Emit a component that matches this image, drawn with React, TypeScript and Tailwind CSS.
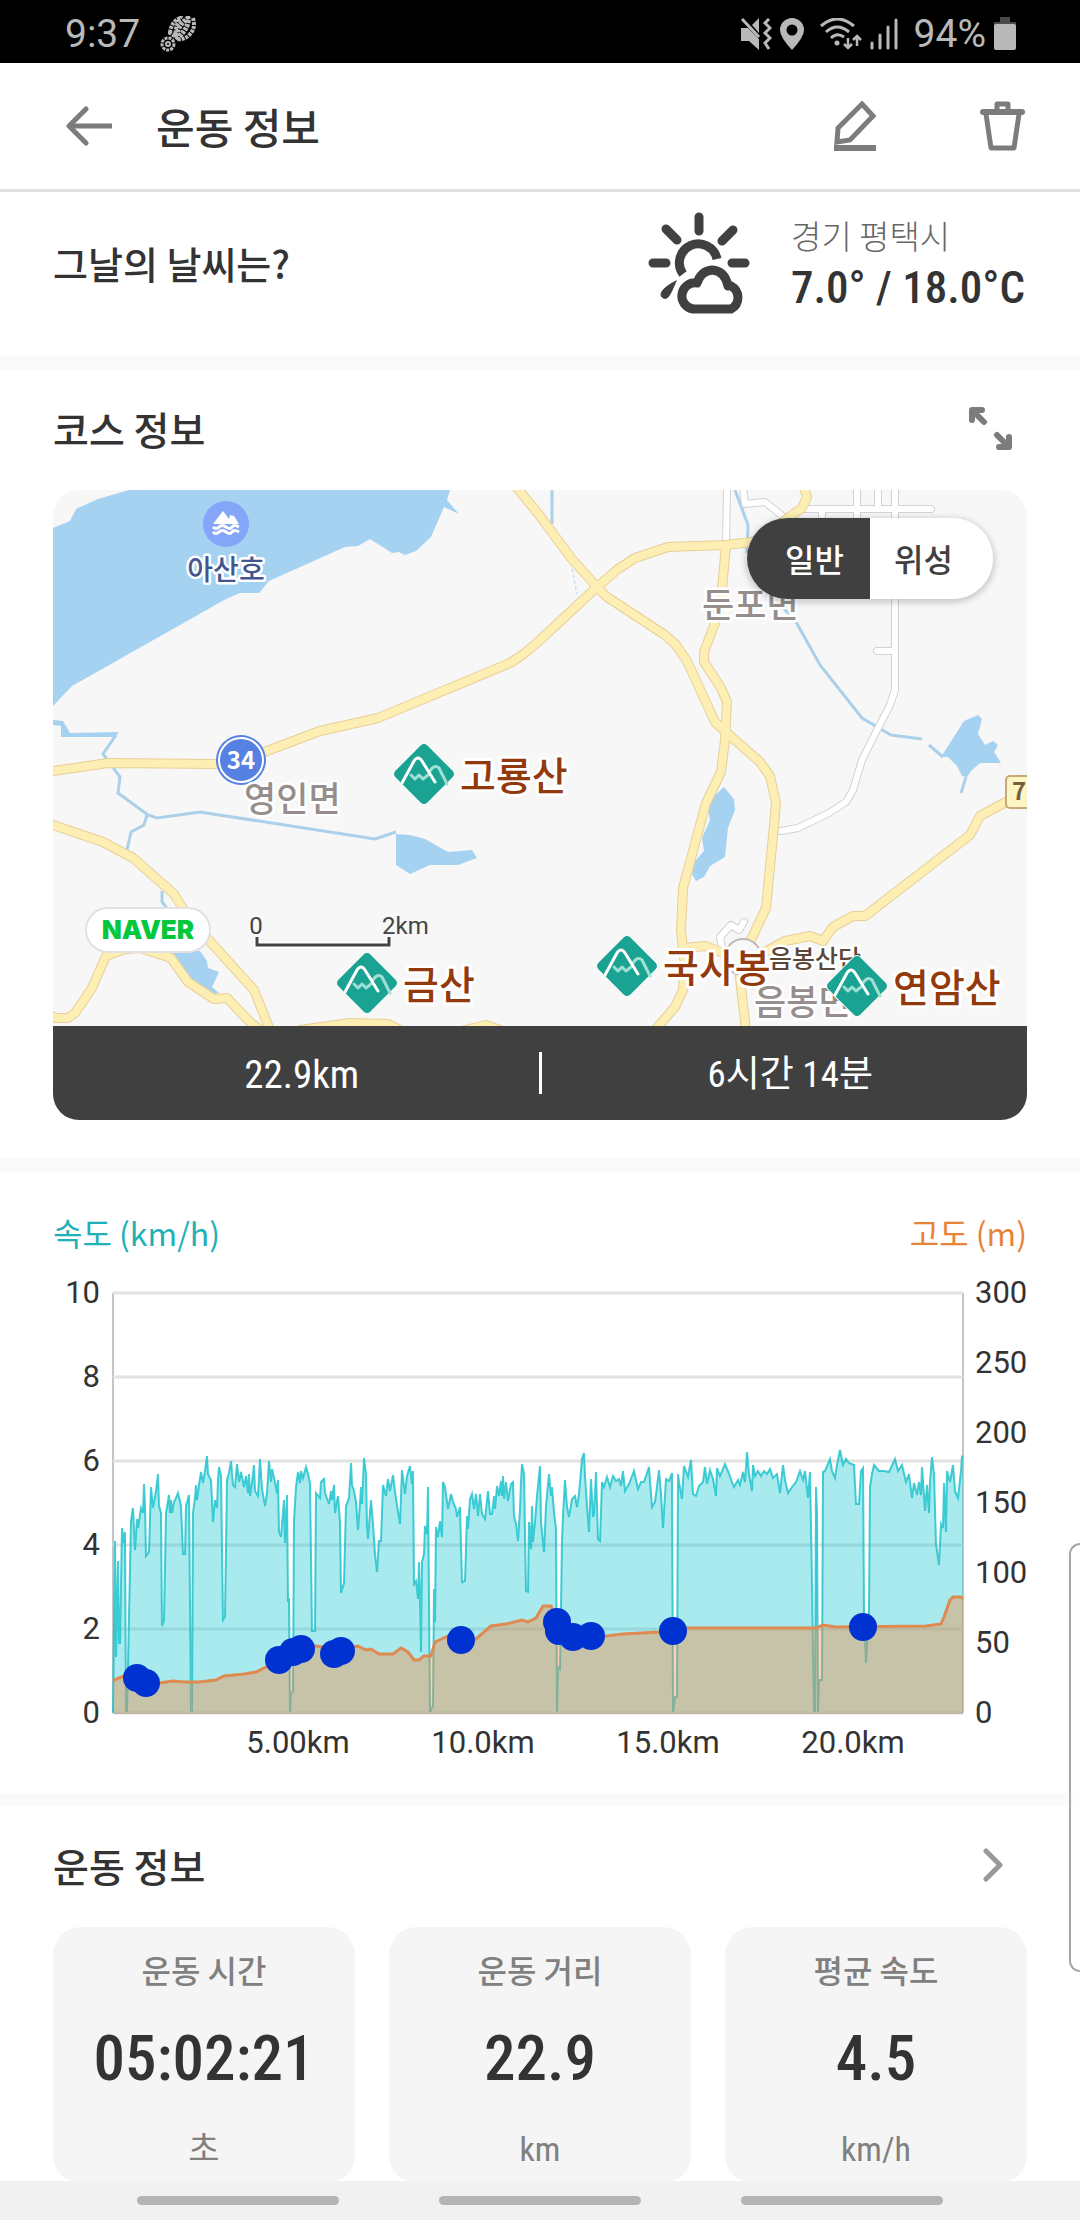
import React, { useState } from 'react';

type Point = [number, number];

// plot area is 850 x 420 units: 37 units per km, 42 units per km/h
const SPEED: Point[] = [
  [0, 420], [2, 248], [3, 364], [5, 268], [6, 350], [7, 350], [9, 235], [11, 250], [12, 239], [13, 420], [14, 420], [18, 228],
  [20, 215], [22, 257], [24, 226], [25, 235], [28, 215], [30, 220], [31, 191], [32, 213], [33, 263], [36, 259], [38, 194], [40, 215],
  [43, 198], [45, 181], [46, 213], [48, 220], [49, 333], [51, 327], [53, 220], [56, 202], [57, 220], [58, 207], [59, 220], [61, 209],
  [63, 205], [65, 200], [68, 213], [70, 261], [72, 261], [73, 213], [76, 202], [78, 420], [79, 420], [80, 220], [82, 205], [83, 192],
  [84, 207], [86, 192], [88, 179], [90, 190], [92, 178], [94, 163], [95, 181], [98, 187], [100, 229], [102, 207], [104, 215], [105, 187],
  [106, 174], [108, 183], [110, 327], [112, 324], [114, 187], [116, 180], [118, 168], [120, 192], [122, 194], [124, 171], [126, 189],
  [128, 179], [131, 194], [133, 183], [135, 200], [136, 181], [137, 203], [139, 190], [141, 172], [142, 198], [145, 203], [147, 166],
  [149, 196], [152, 213], [154, 200], [156, 168], [158, 189], [159, 176], [162, 189], [164, 200], [165, 187], [166, 239], [168, 244],
  [171, 207], [172, 250], [174, 202], [175, 309], [176, 305], [177, 420], [178, 401], [180, 398], [181, 228], [183, 194], [185, 179],
  [187, 190], [188, 178], [190, 185], [193, 174], [195, 181], [197, 190], [199, 338], [202, 338], [203, 200], [207, 205], [208, 189],
  [211, 186], [212, 200], [216, 211], [218, 198], [219, 207], [221, 192], [222, 220], [225, 203], [227, 229], [228, 300], [231, 290],
  [233, 213], [236, 205], [238, 170], [239, 192], [241, 198], [243, 209], [245, 237], [247, 211], [248, 194], [249, 211], [251, 165],
  [253, 181], [254, 233], [255, 246], [258, 207], [260, 231], [262, 261], [264, 279], [266, 248], [268, 248], [270, 192], [273, 203],
  [275, 186], [277, 198], [280, 182], [283, 206], [287, 231], [289, 177], [292, 201], [294, 183], [297, 173], [299, 191], [300, 178],
  [301, 291], [303, 288], [305, 306], [306, 269], [307, 306], [308, 359], [309, 269], [311, 261], [312, 233], [314, 241], [315, 194],
  [317, 420], [318, 417], [320, 413], [321, 296], [322, 329], [323, 234], [325, 244], [327, 228], [329, 244], [330, 189], [332, 194],
  [335, 216], [338, 201], [340, 209], [343, 216], [344, 224], [347, 214], [349, 289], [352, 288], [354, 223], [355, 236], [357, 206],
  [359, 201], [361, 216], [363, 201], [365, 223], [367, 201], [369, 221], [372, 226], [375, 198], [377, 221], [379, 221], [381, 203],
  [382, 216], [384, 193], [386, 203], [388, 188], [389, 203], [390, 183], [391, 206], [393, 189], [395, 208], [398, 191], [400, 189],
  [401, 223], [403, 231], [405, 248], [407, 216], [408, 189], [409, 171], [411, 181], [413, 298], [415, 299], [416, 229], [418, 256],
  [419, 213], [420, 249], [422, 229], [424, 203], [427, 173], [428, 229], [431, 259], [433, 213], [436, 181], [438, 203], [439, 194],
  [441, 219], [443, 236], [444, 420], [445, 374], [447, 376], [449, 249], [450, 223], [452, 187], [454, 214], [456, 224], [459, 206],
  [462, 203], [464, 214], [466, 201], [469, 166], [471, 160], [472, 183], [474, 213], [476, 239], [478, 186], [480, 224], [481, 221],
  [483, 179], [485, 246], [487, 248], [489, 189], [491, 194], [494, 184], [497, 194], [500, 183], [503, 188], [506, 186], [508, 193],
  [510, 178], [512, 198], [516, 191], [521, 178], [525, 196], [528, 189], [531, 189], [536, 174], [537, 188], [539, 214], [542, 209],
  [546, 177], [548, 201], [550, 235], [553, 186], [556, 188], [559, 180], [560, 420], [562, 404], [564, 404], [565, 181], [566, 189],
  [569, 206], [571, 173], [575, 184], [576, 178], [578, 167], [580, 201], [583, 203], [586, 193], [590, 189], [592, 174], [594, 191],
  [597, 177], [600, 186], [603, 203], [604, 175], [607, 183], [612, 171], [615, 178], [619, 189], [621, 194], [625, 187], [627, 192],
  [630, 179], [632, 189], [634, 159], [636, 181], [639, 198], [640, 172], [642, 183], [645, 178], [648, 183], [651, 178], [654, 181],
  [657, 176], [660, 185], [664, 181], [667, 200], [670, 172], [672, 187], [675, 200], [679, 194], [683, 189], [687, 178], [690, 187],
  [692, 178], [695, 205], [697, 179], [699, 290], [701, 420], [702, 420], [703, 194], [704, 220], [705, 420], [706, 387], [709, 387],
  [710, 179], [712, 178], [717, 166], [719, 178], [722, 185], [724, 172], [727, 157], [730, 172], [733, 166], [736, 170], [741, 172],
  [743, 211], [746, 211], [748, 178], [750, 175], [751, 318], [753, 370], [756, 318], [757, 194], [759, 181], [761, 172], [766, 178],
  [771, 178], [776, 179], [782, 166], [785, 178], [789, 172], [793, 189], [796, 181], [799, 205], [801, 190], [804, 202], [806, 189],
  [808, 202], [809, 174], [812, 218], [814, 192], [816, 220], [817, 189], [819, 164], [821, 181], [823, 251], [826, 272], [828, 231],
  [830, 235], [831, 190], [833, 239], [834, 178], [837, 189], [840, 172], [842, 198], [845, 205], [848, 178], [849, 164], [850, 165],
];

const ALTITUDE: Point[] = [
  [0, 388], [3, 386], [11, 383], [24, 386], [33, 390], [46, 390], [60, 388], [72, 389], [86, 389], [103, 387], [111, 383], [131, 381],
  [143, 379], [153, 374], [166, 366], [186, 355], [203, 353], [210, 354], [220, 361], [233, 355], [245, 353], [253, 357], [258, 356],
  [266, 361], [280, 361], [288, 355], [295, 359], [301, 367], [306, 367], [311, 363], [318, 363], [322, 349], [335, 343], [348, 347],
  [363, 346], [371, 339], [378, 333], [393, 331], [409, 327], [415, 329], [423, 325], [430, 313], [438, 313], [440, 318], [444, 329],
  [460, 344], [478, 343], [493, 343], [510, 341], [546, 339], [560, 335], [626, 335], [703, 335], [710, 332], [723, 334], [813, 333],
  [828, 331], [831, 324], [837, 307], [840, 304], [848, 304], [850, 306],
];

const MARKERS: Point[] = [
  [24, 385], [33, 390], [166, 367], [180, 359], [188, 356], [221, 361], [228, 358],
  [348, 347], [444, 329], [446, 338], [460, 344], [478, 343], [560, 338], [750, 334],
];

const toPath = (points: Point[]) => 'M' + points.map(([x, y]) => `${x} ${y}`).join('L');

const MAIN_ROADS = [
  'M53 771L108 763L215 764L264 752L320 731L378 718L510 663L525 653L540 640L597 587L618 569L635 558L668 547L726 545L760 541L785 520L802 508L807 497L804 488',
  'M517 488L540 516L571 558L597 587L607 597L665 635L676 645L687 661L715 722L727 733L760 762L770 776L776 803L773 836L766 908L750 942L742 962',
  'M726 545L721 600L715 623L704 652L704 662L721 688L727 702L725 740L721 772L706 803L683 888L681 930L683 950L685 965L683 990L675 1007L655 1030',
  'M683 948L706 946L730 956L765 952L785 941L810 936L823 941L833 927L853 916L865 916L970 835L980 816L1015 797',
  'M739 970L746 1030',
  'M50 824L103 842L133 858L174 894L190 920L215 947L254 990L270 1030',
  'M50 1015L56 1018L68 1018L75 1013L92 988L106 956L125 949L140 948L171 958L188 982L214 999L227 998L250 1022L260 1030',
  'M300 1030L350 1023L388 1024L400 1030',
  'M465 1030L486 1025L500 1030',
];

const SIDE_ROADS = [
  'M727 488L726 545',
  'M743 488L745 504L765 502L790 522',
  'M805 509H931',
  'M857 488V524',
  'M822 509V530',
  'M878 488V509',
  'M895 488V690L890 705L872 740L862 760L853 790L846 802L829 813L798 828L781 831',
  'M877 651H895',
  'M722 947L720 937L731 925L739 930L744 922',
];

const LAKES = [
  'M53 528L70 521L76 509L98 499L129 490H450L447 500L459 514L444 507L431 537L416 551L405 555L399 552L392 553L370 539L358 546L345 547L327 555L269 581L259 593H240L226 599L72 686L53 706Z',
  'M396 834L410 835L425 839L448 852L472 850L477 858L458 865H430L410 874L396 865Z',
  'M165 945L200 951L207 961L208 968L219 972L212 987L219 993L210 995L190 985L176 962Z',
  'M941 757L964 721L978 715L982 719L978 734L985 745L993 741L998 745L994 752L1001 763L980 763L971 771L967 777L962 776L957 766L948 757Z',
  'M724 787L734 799L735 810L728 828L725 857L710 866L704 877L696 881L692 874L695 861L704 851L702 838L710 820L708 810L713 797Z',
  'M53 720L63 721L70 733L119 732L115 737L61 737L61 726L53 725Z',
];

const RIVERS = [
  'M116 735L103 754L120 777L118 793L148 815L157 818L200 812L375 839L396 832',
  'M147 815L144 825L131 832L127 850',
  'M162 891V902L170 912',
  'M552 490V524',
  'M735 490L748 525L747 553',
  'M778 602L796 622L820 665L862 718L891 735L922 739',
  'M929 745L943 757',
  'M966 777L961 793',
];

const PEAKS = [
  { name: '고룡산', x: 424, y: 774 },
  { name: '금산', x: 367, y: 983 },
  { name: '국사봉', x: 627, y: 966 },
  { name: '연암산', x: 857, y: 986 },
];

const STATS = [
  { label: '운동 시간', value: '05:02:21', unit: '초' },
  { label: '운동 거리', value: '22.9', unit: 'km' },
  { label: '평균 속도', value: '4.5', unit: 'km/h' },
];

const StatusBar: React.FC = () => (
  <div className="flex h-[63px] shrink-0 items-center bg-black pl-[65px] pr-[64px] pt-1 font-[Roboto,sans-serif] text-[39px]/[48px] text-[#b9b9b9]">
    <span>9:37</span>
    <svg className="ml-5 h-9 w-9" viewBox="0 0 36 36" fill="none" stroke="currentColor">
      <circle cx="8" cy="28" r="6" strokeWidth="3" strokeDasharray="3 1" />
      <circle cx="8" cy="28" r="2" strokeWidth="2" />
      <path d="M10 17Q11 6 20 2Q14 14 16 21Z" strokeWidth="4" strokeDasharray="3 1" />
      <path d="M17 20Q17 10 28 2Q30 10 18 22" strokeWidth="5" strokeDasharray="3 1" />
      <path d="M33 2Q36 12 30 18Q25 24 18 23" strokeWidth="4" strokeDasharray="3 1" />
    </svg>
    <div className="ml-auto flex items-center">
      <svg className="h-8 w-8" viewBox="0 0 32 32" fill="currentColor">
        <path d="M1 10H8L19 21V32L9 23H1ZM19 0V15L12 7Z" />
        <path d="M2 1L19 19" stroke="currentColor" strokeWidth="3" />
        <path d="M29 1L25 5L30 10L25 15L30 20L25 25L29 31" fill="none" stroke="currentColor" strokeWidth="3" />
      </svg>
      <svg className="ml-2 h-8 w-6" viewBox="0 0 24 32" fill="currentColor" fillRule="evenodd">
        <path d="M12 0A12 12 0 0 1 24 12Q24 19 12 32Q0 19 0 12A12 12 0 0 1 12 0ZM12 6.500A5.500 5.500 0 1 0 12 17.500A5.500 5.500 0 1 0 12 6.500Z" />
      </svg>
      <svg className="ml-4 h-8 w-[42px]" viewBox="0 0 42 32" fill="none" stroke="currentColor" strokeWidth="3">
        <path d="M1 8Q17 -6 34 8M6 14Q17 4 29 14M11 20Q17 14 24 19" />
        <circle cx="17" cy="25" r="2.500" fill="currentColor" stroke="none" />
        <path d="M28 20V30M24 26L28 30L32 26M37 28V18M33 22L37 18L41 22" strokeWidth="2.500" />
      </svg>
      <svg className="ml-2 h-8 w-7" viewBox="0 0 28 32" stroke="currentColor" strokeWidth="3" strokeLinecap="round">
        <path d="M2 25V30M10 17V30M18 9V30M26 2V30" />
      </svg>
      <span className="ml-4">94%</span>
      <svg className="ml-2 h-[33px] w-[22px]" viewBox="0 0 22 33" fill="currentColor">
        <path d="M6 0H16V5H22V9H0V5H6Z" fill="#4a4a4a" />
        <rect y="7" width="22" height="26" rx="2" />
      </svg>
    </div>
  </div>
);

const Header: React.FC = () => (
  <header className="flex h-[129px] shrink-0 items-center border-b-[3px] border-[#e0e0e0] pl-[66px] pr-[55px] text-[#7c7c7c]">
    <button type="button" aria-label="뒤로">
      <svg className="h-10 w-[47px]" viewBox="0 0 47 40" fill="none" stroke="currentColor" strokeWidth="5">
        <path d="M3 20H46" />
        <path d="M20 3L3 20L20 37" strokeLinecap="round" strokeLinejoin="round" />
      </svg>
    </button>
    <h1 className="ml-[43px] text-[42px]/[56px] font-medium text-[#333]">운동 정보</h1>
    <button type="button" aria-label="수정" className="ml-auto">
      <svg className="h-[52px] w-[42px]" viewBox="0 0 42 52" fill="none" stroke="currentColor" strokeWidth="5">
        <path d="M28 4L39 16L16 40L3 42L4 28Z" />
        <path d="M0 48H42" strokeWidth="6" />
      </svg>
    </button>
    <button type="button" aria-label="삭제" className="ml-[104px]">
      <svg className="h-[52px] w-[45px]" viewBox="0 0 45 52" fill="none" stroke="currentColor" strokeWidth="5">
        <path d="M17 12V4H28V12" strokeLinejoin="round" />
        <path d="M3 12H42" strokeLinecap="round" strokeWidth="6" />
        <path d="M6 14L11 48H34L39 14" strokeLinejoin="round" />
      </svg>
    </button>
  </header>
);

const Weather: React.FC = () => (
  <section className="flex items-center pb-[42px] pl-[53px] pr-[55px] pt-5 text-[#333]">
    <h2 className="text-[38px]/[48px] font-medium">그날의 날씨는?</h2>
    <svg className="ml-auto h-[102px] w-[102px]" viewBox="0 0 102 102" fill="none" stroke="#404040" strokeWidth="9" strokeLinecap="round">
      <path d="M51 5V19M18 17L29 28M85 18L74 29M5 51H18M84 51H97" />
      <path d="M35 62A19 19 0 1 1 69 47" strokeLinecap="butt" />
      <path d="M28 69Q14 76 13 82A4 4 0 0 0 20 85Q23 82 28 69Z" fill="#404040" strokeWidth="1" />
      <path d="M45 97H83A13 13 0 0 0 83 74Q82 73 80 74Q77 59 64 58Q53 59 49 71A13 13 0 0 0 45 97Z" strokeLinejoin="round" />
    </svg>
    <div className="ml-[41px]">
      <p className="text-[33px]/[46px] font-light text-[#666]">경기 평택시</p>
      <p className="mt-1 font-['Roboto_Condensed',Roboto,sans-serif] text-[45px]/[52px] font-medium">7.0° / 18.0°C</p>
    </div>
  </section>
);

const MapView: React.FC = () => (
  <svg
    className="block h-auto w-full"
    viewBox="53 490 974 536"
    role="img"
    aria-label="코스 지도"
    fontFamily="'Noto Sans CJK KR', sans-serif"
  >
    <rect x="53" y="490" width="974" height="536" fill="#f7f7f7" />
    <g fill="#a6d2f2">
      {LAKES.map((d) => <path key={d} d={d} />)}
    </g>
    <g fill="none" stroke="#aad0ea" strokeWidth="3">
      {RIVERS.map((d) => <path key={d} d={d} />)}
      <path d="M571 563L577 594" strokeWidth="1" strokeDasharray="3 3" />
    </g>
    <g fill="none" strokeLinecap="round" strokeLinejoin="round">
      <g stroke="#d2d2d2" strokeWidth="8">
        {SIDE_ROADS.map((d) => <path key={d} d={d} />)}
      </g>
      <g stroke="#fff" strokeWidth="6">
        {SIDE_ROADS.map((d) => <path key={d} d={d} />)}
      </g>
      <g stroke="#e8cf98" strokeWidth="10">
        {MAIN_ROADS.map((d) => <path key={d} d={d} />)}
      </g>
      <g stroke="#fdeeb3" strokeWidth="8">
        {MAIN_ROADS.map((d) => <path key={d} d={d} />)}
      </g>
    </g>

    <circle cx="226" cy="524" r="23" fill="#85a6f8" />
    <path d="M213 524L223 511L229 519L230 515L234 516L239 524Z" fill="#fff" />
    <path d="M213 527q3 3 6 0t7 0t6 0t7 0M213 532q3 3 6 0t7 0t6 0t7 0" fill="none" stroke="#fff" strokeWidth="3" />

    <circle cx="241" cy="760" r="25" fill="#5780e3" />
    <circle cx="241" cy="760" r="22" fill="none" stroke="#fff" strokeWidth="2" />
    <text x="241" y="769" fontSize="24" fontWeight="700" fill="#fff" textAnchor="middle">34</text>

    <rect x="1006" y="776" width="40" height="32" rx="4" fill="#fdf5c4" stroke="#c8a878" strokeWidth="2" />
    <text x="1012" y="800" fontSize="24" fontWeight="700" fill="#74603c">7</text>

    <circle cx="743" cy="957" r="18" fill="#f7f8f8" stroke="#c0b8b8" strokeWidth="2" />

    <g className="[paint-order:stroke]" stroke="#fff" strokeWidth="5" strokeLinejoin="round" fontWeight="500">
      <text x="226" y="580" fontSize="28" fill="#44568f" textAnchor="middle">아산호</text>
      <g fontSize="35" fill="#958e8c">
        <text x="244" y="812">영인면</text>
        <text x="702" y="618">둔포면</text>
        <text x="754" y="1015">음봉면</text>
      </g>
      <text x="769" y="968" fontSize="25" fill="#5b4738">음봉산단</text>
    </g>

    {PEAKS.map(({ name, x, y }) => (
      <g key={name}>
        <g transform={`translate(${x} ${y})`} fill="none" strokeLinecap="round" strokeLinejoin="round">
          <rect x="-23" y="-23" width="46" height="46" rx="5" transform="rotate(45)" fill="#1aa392" stroke="#fff" />
          <path d="M6 -3Q10 -10 15 -6L23 10M-13 1L-9 5L-5 1L-1 5L4 1" stroke="#9fe0d4" strokeWidth="3" />
          <path d="M-22 9L-10 -13Q-6 -19 -2 -13L11 8" stroke="#fff" strokeWidth="3" />
        </g>
        <text
          className="[paint-order:stroke]"
          x={x + 36}
          y={y + 16}
          fontSize="39"
          fontWeight="500"
          fill="#933a0c"
          stroke="#fff"
          strokeWidth="6"
          strokeLinejoin="round"
        >
          {name}
        </text>
      </g>
    ))}

    <g fontFamily="Roboto, sans-serif" fontSize="24" fill="#444">
      <text x="256" y="934" textAnchor="middle">0</text>
      <text x="382" y="934">2km</text>
    </g>
    <path d="M257 937V945H389V937" fill="none" stroke="#fff" strokeWidth="6" />
    <path d="M257 937V945H389V937" fill="none" stroke="#444" strokeWidth="3" />
  </svg>
);

const CourseInfo: React.FC = () => {
  const [mapType, setMapType] = useState('일반');

  return (
    <section className="px-[53px] pb-[39px] pt-[35px]">
      <div className="mb-[38px] flex items-center justify-between">
        <h2 className="text-[39px]/[48px] font-medium text-[#333]">코스 정보</h2>
        <button type="button" aria-label="지도 확대" className="mr-[15px] text-[#7c7c7c]">
          <svg className="h-[43px] w-[43px]" viewBox="0 0 43 43" fill="none" stroke="currentColor" strokeWidth="6" strokeLinecap="round" strokeLinejoin="round">
            <path d="M3 13V3H13M4 4L15 15M40 30V40H30M28 28L39 39" />
          </svg>
        </button>
      </div>
      <div className="overflow-hidden rounded-[26px]">
        <div className="relative">
          <MapView />
          <div className="absolute right-[34px] top-[28px] flex overflow-hidden rounded-full shadow-[0_2px_6px_2px_rgba(0,0,0,0.18)]">
            {['일반', '위성'].map((type) => (
              <button
                key={type}
                type="button"
                aria-pressed={mapType === type}
                onClick={() => setMapType(type)}
                className={
                  mapType === type
                    ? 'w-[123px] bg-[#404040] pl-3 text-[32px]/[81px] font-medium text-white'
                    : 'w-[123px] bg-white pr-4 text-[32px]/[81px] font-medium text-[#404040]'
                }
              >
                {type}
              </button>
            ))}
          </div>
          <div className="absolute bottom-[73px] left-[32px] flex h-[46px] w-[126px] items-center justify-center rounded-full border-2 border-[#e2e2e2] bg-white font-[Inter,sans-serif] text-[26px]/[30px] font-black text-[#03c73c]">
            NAVER
          </div>
        </div>
        <div className="flex h-[94px] items-center bg-[#404040] text-white">
          <span className="flex-1 pl-3 pt-1 text-center font-['Roboto_Condensed',Roboto,sans-serif] text-[39px]/[48px]">22.9km</span>
          <span className="h-[42px] w-[3px] bg-white" />
          <span className="flex-1 pl-3 pt-1 text-center font-['Roboto_Condensed',Roboto,'Noto_Sans_CJK_KR',sans-serif] text-[37px]/[48px]">6시간 14분</span>
        </div>
      </div>
    </section>
  );
};

const SpeedChart: React.FC = () => (
  <section className="px-[53px] pb-4 pt-10">
    <div className="mb-[13px] flex justify-between text-[32px]/[40px]">
      <span className="text-[#1fb0b8]">속도 (km/h)</span>
      <span className="text-[#e8833a]">고도 (m)</span>
    </div>
    <svg
      className="block h-auto w-full"
      viewBox="-60 -28 974 512"
      role="img"
      aria-label="속도와 고도"
      fontFamily="Roboto, sans-serif"
      fontSize="31"
      fill="#333"
    >
      <path d="M0 0V420M850 0V420" stroke="#8a8a8a" strokeWidth="1" />
      {[10, 8, 6, 4, 2, 0].map((v, i) => (
        <g key={v}>
          <path d={`M0 ${i * 84}H850`} stroke="#e2e2e2" strokeWidth="3" />
          <text x="-13" y={i * 84 + 10} textAnchor="end">{v}</text>
        </g>
      ))}
      {[300, 250, 200, 150, 100, 50, 0].map((v, i) => (
        <text key={v} x="862" y={i * 70 + 10}>{v}</text>
      ))}
      {['5.00km', '10.0km', '15.0km', '20.0km'].map((v, i) => (
        <text key={v} x={185 * (i + 1)} y="460" textAnchor="middle">{v}</text>
      ))}

      <path d={`${toPath(SPEED)}V420Z`} fill="#16c5d0" fillOpacity="0.37" />
      <path d={toPath(SPEED)} fill="none" stroke="#16c0ca" strokeOpacity="0.8" strokeWidth="2" />
      <path d={`${toPath(ALTITUDE)}V420H0Z`} fill="#f58941" fillOpacity="0.4" />
      <path d={toPath(ALTITUDE)} fill="none" stroke="#de8a50" strokeWidth="3" />
      <path d="M0 420H850" stroke="#bdb9a4" strokeWidth="2" />
      {MARKERS.map(([x, y]) => (
        <circle key={x} cx={x} cy={y} r="14" fill="#0032d2" />
      ))}
    </svg>
  </section>
);

const Divider: React.FC = () => <div className="h-[13px] bg-[#fafafa]"></div>;

const App: React.FC = () => {
  return (
    <div className="relative flex h-screen flex-col overflow-hidden bg-white font-['Noto_Sans_CJK_KR',sans-serif]">
      <StatusBar />
      <Header />
      <main className="min-h-0 flex-1 overflow-y-auto [scrollbar-width:none]">
        <Weather />
        <Divider />
        <CourseInfo />
        <Divider />
        <SpeedChart />
        <Divider />
        <section className="px-[53px] pt-[35px]">
          <div className="mb-[38px] flex items-center justify-between">
            <h2 className="text-[39px]/[48px] font-medium text-[#333]">운동 정보</h2>
            <button type="button" aria-label="더 보기" className="mr-6 text-[#999]">
              <svg className="h-[34px] w-5" viewBox="0 0 20 34" fill="none" stroke="currentColor" strokeWidth="5" strokeLinecap="round" strokeLinejoin="round">
                <path d="M3 3L17 17L3 31" />
              </svg>
            </button>
          </div>
          <div className="grid grid-cols-3 gap-[34px]">
            {STATS.map(({ label, value, unit }) => (
              <div key={label} className="rounded-[28px] bg-[#f5f5f5] pb-[14px] pt-[22px] text-center text-[#808080]">
                <p className="text-[32px]/[40px] font-medium">{label}</p>
                <p className="my-[34px] font-['Roboto_Condensed',Roboto,sans-serif] text-[63px]/[72px] font-medium text-[#333]">{value}</p>
                <p className="font-['Roboto_Condensed',Roboto,'Noto_Sans_CJK_KR',sans-serif] text-[34px]/[40px]">{unit}</p>
              </div>
            ))}
          </div>
        </section>
      </main>
      <nav className="flex h-[39px] shrink-0 items-center justify-center gap-[100px] bg-[#f1f1f1]">
        <button type="button" aria-label="최근 앱" className="h-[9px] w-[202px] rounded-full bg-[#b4b4b4]" />
        <button type="button" aria-label="홈" className="h-[9px] w-[202px] rounded-full bg-[#b4b4b4]" />
        <button type="button" aria-label="이전" className="h-[9px] w-[202px] rounded-full bg-[#b4b4b4]" />
      </nav>
      <div className="absolute right-0 top-[1543px] h-[429px] w-[11px] rounded-l-[14px] border-2 border-r-0 border-[#a8a8a8] bg-white/50" />
    </div>
  );
};

export default App;
